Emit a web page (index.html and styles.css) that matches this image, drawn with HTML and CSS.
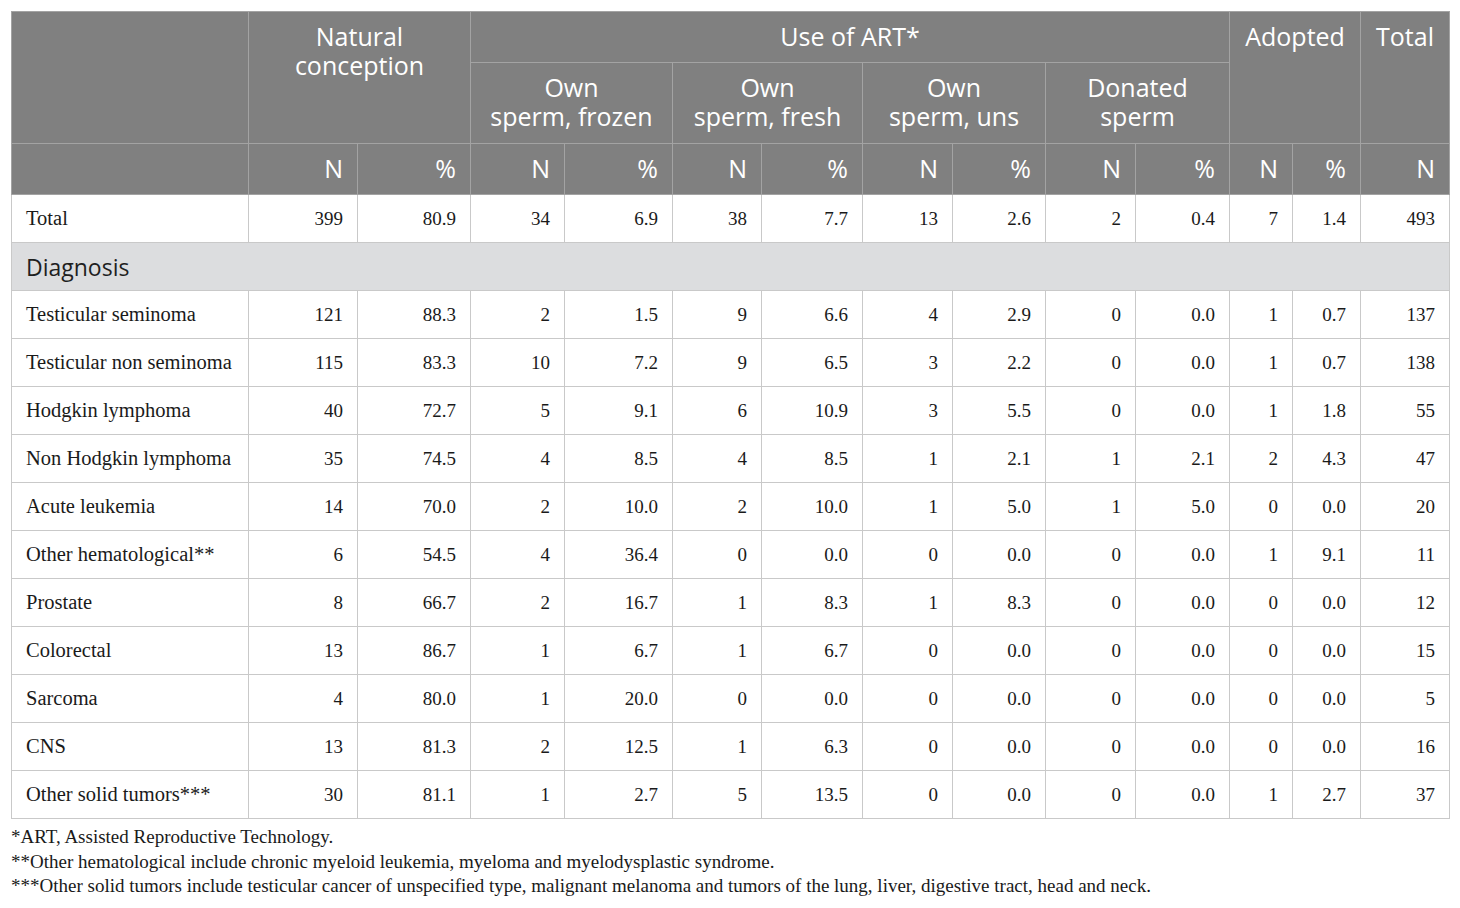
FILE: index.html
```html
<!DOCTYPE html>
<html>
<head>
<meta charset="utf-8">
<link rel="stylesheet" href="styles.css">
</head>
<body>
<div class="page">
<table class="data">
<colgroup>
<col style="width:237px"><col style="width:109px"><col style="width:113px"><col style="width:94px"><col style="width:108px"><col style="width:89px"><col style="width:101px"><col style="width:90px"><col style="width:93px"><col style="width:90px"><col style="width:94px"><col style="width:63px"><col style="width:68px"><col style="width:89px">
</colgroup>
<thead>
<tr>
<th rowspan="2"></th>
<th colspan="2" rowspan="2" class="c">Natural<br>conception</th>
<th colspan="8" class="c">Use of ART*</th>
<th colspan="2" rowspan="2" class="c">Adopted</th>
<th rowspan="2" class="c">Total</th>
</tr>
<tr class="sub">
<th colspan="2" class="c">Own<br>sperm, frozen</th>
<th colspan="2" class="c">Own<br>sperm, fresh</th>
<th colspan="2" class="c">Own<br>sperm, uns</th>
<th colspan="2" class="c">Donated<br>sperm</th>
</tr>
<tr>
<th></th>
<th class="r">N</th><th class="r">%</th>
<th class="r">N</th><th class="r">%</th>
<th class="r">N</th><th class="r">%</th>
<th class="r">N</th><th class="r">%</th>
<th class="r">N</th><th class="r">%</th>
<th class="r">N</th><th class="r">%</th>
<th class="r">N</th>
</tr>
</thead>
<tbody>
<tr><td>Total</td><td>399</td><td>80.9</td><td>34</td><td>6.9</td><td>38</td><td>7.7</td><td>13</td><td>2.6</td><td>2</td><td>0.4</td><td>7</td><td>1.4</td><td>493</td></tr>
<tr class="section"><td colspan="14">Diagnosis</td></tr>
<tr><td>Testicular seminoma</td><td>121</td><td>88.3</td><td>2</td><td>1.5</td><td>9</td><td>6.6</td><td>4</td><td>2.9</td><td>0</td><td>0.0</td><td>1</td><td>0.7</td><td>137</td></tr>
<tr><td>Testicular non seminoma</td><td>115</td><td>83.3</td><td>10</td><td>7.2</td><td>9</td><td>6.5</td><td>3</td><td>2.2</td><td>0</td><td>0.0</td><td>1</td><td>0.7</td><td>138</td></tr>
<tr><td>Hodgkin lymphoma</td><td>40</td><td>72.7</td><td>5</td><td>9.1</td><td>6</td><td>10.9</td><td>3</td><td>5.5</td><td>0</td><td>0.0</td><td>1</td><td>1.8</td><td>55</td></tr>
<tr><td>Non Hodgkin lymphoma</td><td>35</td><td>74.5</td><td>4</td><td>8.5</td><td>4</td><td>8.5</td><td>1</td><td>2.1</td><td>1</td><td>2.1</td><td>2</td><td>4.3</td><td>47</td></tr>
<tr><td>Acute leukemia</td><td>14</td><td>70.0</td><td>2</td><td>10.0</td><td>2</td><td>10.0</td><td>1</td><td>5.0</td><td>1</td><td>5.0</td><td>0</td><td>0.0</td><td>20</td></tr>
<tr><td>Other hematological**</td><td>6</td><td>54.5</td><td>4</td><td>36.4</td><td>0</td><td>0.0</td><td>0</td><td>0.0</td><td>0</td><td>0.0</td><td>1</td><td>9.1</td><td>11</td></tr>
<tr><td>Prostate</td><td>8</td><td>66.7</td><td>2</td><td>16.7</td><td>1</td><td>8.3</td><td>1</td><td>8.3</td><td>0</td><td>0.0</td><td>0</td><td>0.0</td><td>12</td></tr>
<tr><td>Colorectal</td><td>13</td><td>86.7</td><td>1</td><td>6.7</td><td>1</td><td>6.7</td><td>0</td><td>0.0</td><td>0</td><td>0.0</td><td>0</td><td>0.0</td><td>15</td></tr>
<tr><td>Sarcoma</td><td>4</td><td>80.0</td><td>1</td><td>20.0</td><td>0</td><td>0.0</td><td>0</td><td>0.0</td><td>0</td><td>0.0</td><td>0</td><td>0.0</td><td>5</td></tr>
<tr><td>CNS</td><td>13</td><td>81.3</td><td>2</td><td>12.5</td><td>1</td><td>6.3</td><td>0</td><td>0.0</td><td>0</td><td>0.0</td><td>0</td><td>0.0</td><td>16</td></tr>
<tr><td>Other solid tumors***</td><td>30</td><td>81.1</td><td>1</td><td>2.7</td><td>5</td><td>13.5</td><td>0</td><td>0.0</td><td>0</td><td>0.0</td><td>1</td><td>2.7</td><td>37</td></tr>
</tbody>
</table>
<div class="notes">
<p>*ART, Assisted Reproductive Technology.</p>
<p>**Other hematological include chronic myeloid leukemia, myeloma and myelodysplastic syndrome.</p>
<p>***Other solid tumors include testicular cancer of unspecified type, malignant melanoma and tumors of the lung, liver, digestive tract, head and neck.</p>
</div>
</div>
</body>
</html>
```
FILE: styles.css
```css
html, body {
  margin: 0;
  padding: 0;
  background: #ffffff;
}
.page {
  padding: 11px 11px 0 11px;
}
.data {
  table-layout: fixed;
  width: 1438px;
  border-collapse: collapse;
  font-family: "Liberation Serif", "Times New Roman", serif;
  font-size: 19px;
  color: #1a1a1a;
}
.data th {
  background: #808080;
  color: #ffffff;
  font-family: "Open Sans", "Noto Sans", sans-serif;
  font-weight: normal;
  font-size: 25px;
  line-height: 29px;
  padding: 10px 14px 11px 12px;
  vertical-align: top;
  border: 1px solid #a3a3a3;
  white-space: nowrap;
}
.data tr.sub th { padding-bottom: 12px; }
.data th.c { text-align: center; padding-left: 12px; padding-right: 12px; }
.data th.r { text-align: right; }
.data td {
  height: 48px;
  box-sizing: border-box;
  padding: 0 14px;
  border: 1px solid #c9c9c9;
  text-align: right;
  vertical-align: middle;
}
.data td:first-child {
  text-align: left;
  font-size: 20.5px;
}
.data tr.section td {
  background: #dcdddf;
  font-family: "Open Sans", "Noto Sans", sans-serif;
  font-size: 23px;
  color: #1f1f1f;
  text-align: left;
}
.notes {
  font-family: "Liberation Serif", "Times New Roman", serif;
  font-size: 19px;
  color: #1a1a1a;
  padding-top: 6px;
}
.notes p {
  margin: 0;
  line-height: 24.5px;
}
```
